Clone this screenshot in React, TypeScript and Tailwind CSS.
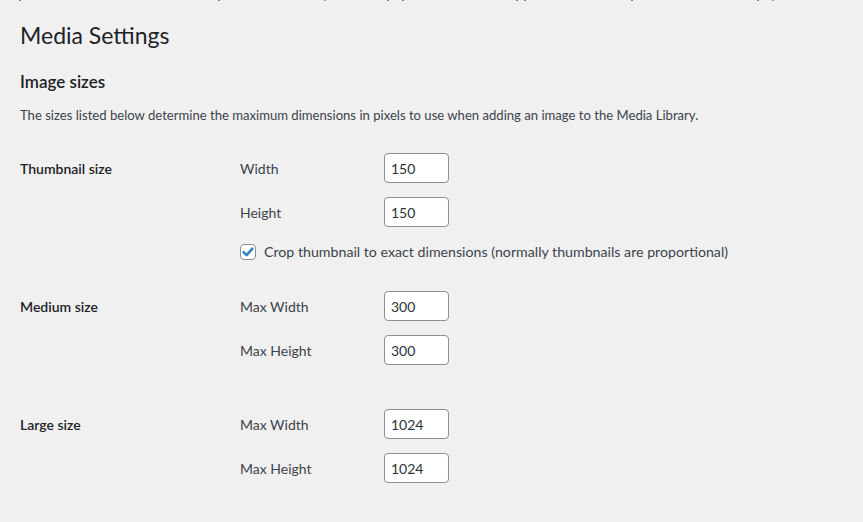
import React from "react";

const font = { fontFamily: 'Lato, "Open Sans", sans-serif' };

function NumberField({ value }: { value: string }) {
  return (
    <input
      type="text"
      defaultValue={value}
      className="h-[30px] w-[65px] rounded-[4px] border border-[#8c8f94] bg-white pl-[6px] text-[14px] text-[#2c3338] outline-none"
    />
  );
}

function FieldRow({ label, value }: { label: string; value: string }) {
  return (
    <div className="flex h-[30px] items-center">
      <span className="w-[144px] text-[14px] text-[#3c434a]">{label}</span>
      <NumberField value={value} />
    </div>
  );
}

function SizeRow({
  title,
  fields,
  children,
  className = "",
}: {
  title: string;
  fields: [string, string][];
  children?: React.ReactNode;
  className?: string;
}) {
  return (
    <div className={"flex items-start " + className}>
      <div className="flex h-[30px] w-[220px] items-center text-[14px] font-semibold text-[#1d2327]">{title}</div>
      <div className="flex flex-col gap-[14px]">
        {fields.map(([l, v]) => (
          <FieldRow key={l} label={l} value={v} />
        ))}
        {children}
      </div>
    </div>
  );
}

export default function App() {
  return (
    <div className="h-[522px] w-[863px] overflow-hidden bg-[#f0f0f1] px-[20px]" style={font}>
      {/* descenders of the line cut off above */}
      <div className="flex h-px">
        <span className="ml-[-1px] h-px w-[2px] bg-[#7d8090]" />
        <span className="ml-[197px] h-px w-[2px] bg-[#7d8090]" />
        <span className="ml-[104px] h-px w-[2px] bg-[#b0a070]" />
        <span className="ml-[61px] h-px w-[2px] bg-[#7d8090]" />
        <span className="ml-[13px] h-px w-[2px] bg-[#7d8090]" />
        <span className="ml-[112px] h-px w-[2px] bg-[#7d8090]" />
        <span className="ml-[6px] h-px w-[2px] bg-[#7d8090]" />
        <span className="ml-[105px] h-px w-[2px] bg-[#7d8090]" />
        <span className="ml-[124px] h-px w-[2px] bg-[#7d8090]" />
        <span className="ml-[13px] h-px w-[2px] bg-[#b0a070]" />
      </div>

      <h1 className="mt-[19px] text-[23px] leading-[30px] font-normal text-[#1d2327]">Media Settings</h1>

      <h2 className="mt-[21px] text-[17px] leading-[22px] font-semibold text-[#1d2327]">Image sizes</h2>

      <p className="mt-[13px] text-[13.1px] leading-[18px] text-[#3c434a]">
        The sizes listed below determine the maximum dimensions in pixels to use when adding an image to the Media Library.
      </p>

      <div className="mt-[29px]">
        <SizeRow
          title="Thumbnail size"
          fields={[
            ["Width", "150"],
            ["Height", "150"],
          ]}
        >
          <label className="-mt-[4px] flex h-[30px] items-center gap-[8px] text-[14.2px] text-[#3c434a]">
            <span className="flex h-[16px] w-[16px] items-center justify-center rounded-[4px] border border-[#8c8f94] bg-white">
              <svg viewBox="0 0 16 16" className="h-[14px] w-[14px]">
                <path d="M3 8.2 L6.4 11.6 L13 4.2" fill="none" stroke="#3582c4" strokeWidth="3" strokeLinecap="round" strokeLinejoin="round" />
              </svg>
            </span>
            Crop thumbnail to exact dimensions (normally thumbnails are proportional)
          </label>
        </SizeRow>

        <SizeRow
          className="mt-[24px]"
          title="Medium size"
          fields={[
            ["Max Width", "300"],
            ["Max Height", "300"],
          ]}
        />

        <SizeRow
          className="mt-[44px]"
          title="Large size"
          fields={[
            ["Max Width", "1024"],
            ["Max Height", "1024"],
          ]}
        />
      </div>
    </div>
  );
}
